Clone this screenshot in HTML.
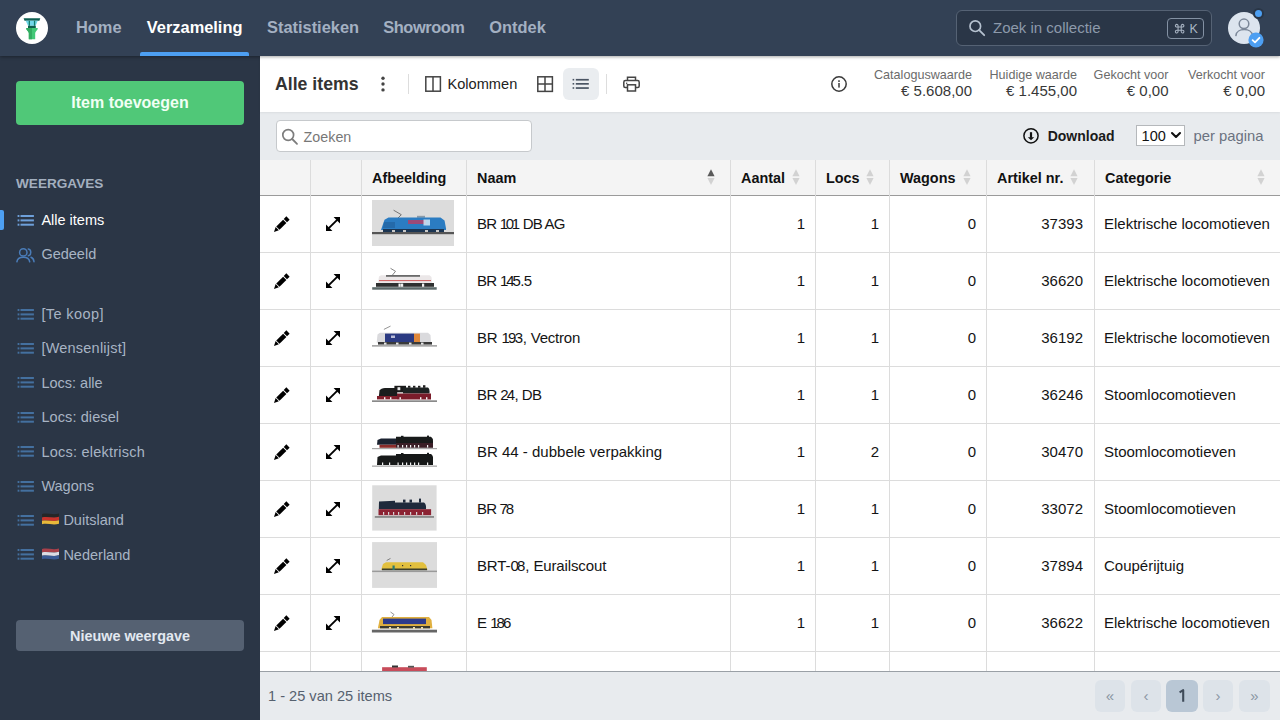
<!DOCTYPE html>
<html><head><meta charset="utf-8">
<style>
*{box-sizing:border-box;margin:0;padding:0}
html,body{width:1280px;height:720px;overflow:hidden;background:#fff}
body{font-family:"Liberation Sans",sans-serif;position:relative;color:#1f1f1f}
.a{position:absolute;white-space:nowrap;line-height:1}
svg{position:absolute;overflow:visible}
#hdr{position:absolute;left:0;top:0;width:1280px;height:56px;background:#334155;z-index:5;box-shadow:0 1px 3px rgba(0,0,0,.35)}
#side{position:absolute;left:0;top:56px;width:260px;height:664px;background:#2b3646}
#tool{position:absolute;left:260px;top:56px;width:1020px;height:56px;background:#fff;z-index:2;box-shadow:0 1px 2px rgba(0,0,0,.06)}
#filt{position:absolute;left:260px;top:112px;width:1020px;height:48px;background:#e8ebee}
#tbl{position:absolute;left:260px;top:160px;width:1020px;height:511px;background:#fff;overflow:hidden}
#foot{position:absolute;left:260px;top:671px;width:1020px;height:49px;background:#e8ebee;border-top:1px solid #9aa0a6}
.nav{font-size:16.4px;font-weight:700;color:#a3b0c2}
.si{font-size:14.5px;color:#a8b4c4}
.th{font-size:14.4px;font-weight:700;color:#111}
.td{font-size:15px;color:#141414}
.r{text-align:right}
.vl{position:absolute;top:0;width:1px;height:511px;background:#dcdcdc}
.hl{position:absolute;left:0;width:1020px;height:1px;background:#dcdcdc}
.pg{position:absolute;top:8px;width:30px;height:32px;border-radius:6px;background:#dde3e9;color:#8a96a3;font-size:15px;text-align:center;line-height:32px}
.lab{font-size:12.6px;color:#6b6b6b;text-align:right}
.val{font-size:15px;color:#383838;text-align:right}
</style></head><body>

<div id="hdr">
<div style="position:absolute;left:16px;top:12px;width:32px;height:32px;border-radius:50%;background:#fff"></div>
<svg style="left:16px;top:12px" width="32" height="32" viewBox="0 0 32 32">
<path d="M7.6 6.3 H24.3 L23.4 8.7 H8.5 Z" fill="#0e5f52"/>
<path d="M9.7 8.7 H21.7 L19.7 13.8 H12 Z" fill="#72d8ea"/>
<rect x="12.7" y="8.7" width="1.3" height="5.1" fill="#157d6c"/>
<rect x="17.9" y="8.7" width="1.3" height="5.1" fill="#157d6c"/>
<rect x="12" y="13.8" width="7.8" height="2.2" fill="#0f5e4c"/>
<path d="M10.2 16 H21.8 C21.8 18.6 19.2 19.4 19.2 21 V27.2 H12.8 V21 C12.8 19.4 10.2 18.6 10.2 16 Z" fill="#43c978"/>
<path d="M10.2 16 H16 V27.2 H12.8 V21 C12.8 19.4 10.2 18.6 10.2 16 Z" fill="#33ad62"/>
</svg>
<div class="a nav" style="left:76px;top:19px;color:#a3b0c2;letter-spacing:0px">Home</div>
<div class="a nav" style="left:146.8px;top:19px;color:#fff;letter-spacing:0px">Verzameling</div>
<div class="a nav" style="left:267px;top:19px;color:#a3b0c2;letter-spacing:0px">Statistieken</div>
<div class="a nav" style="left:383.3px;top:19px;color:#a3b0c2;letter-spacing:-0.45px">Showroom</div>
<div class="a nav" style="left:489.3px;top:19px;color:#a3b0c2;letter-spacing:0px">Ontdek</div>
<div style="position:absolute;left:140px;top:52px;width:109px;height:4px;background:#4d9ff2;border-radius:2px 2px 0 0"></div>
<div style="position:absolute;left:956px;top:10px;width:256px;height:36px;border:1px solid #556274;border-radius:6px;background:#2a3647"></div>
<svg style="left:968px;top:20px" width="18" height="18" viewBox="0 0 18 18"><circle cx="7.3" cy="6.2" r="5.3" fill="none" stroke="#b5c1cf" stroke-width="1.7"/><path d="M11.2 10.2 L16.2 15.2" stroke="#b5c1cf" stroke-width="1.8" stroke-linecap="round"/></svg>
<div class="a" style="left:993px;top:19.5px;font-size:15px;color:#8d9aab">Zoek in collectie</div>
<div style="position:absolute;left:1167px;top:18px;width:37px;height:21px;border:1px solid #8391a3;border-radius:4px"></div>
<svg style="left:1175px;top:23.6px" width="9.3" height="9.3" viewBox="0 0 10 10"><path d="M3.3 3.3 V1.9 A1.45 1.45 0 1 0 1.9 3.3 H8.1 A1.45 1.45 0 1 0 6.7 1.9 V8.1 A1.45 1.45 0 1 0 8.1 6.7 H1.9 A1.45 1.45 0 1 0 3.3 8.1 Z" fill="none" stroke="#a9b5c4" stroke-width="1.1"/></svg>
<div class="a" style="left:1189.5px;top:22.6px;font-size:12.5px;color:#a9b5c4">K</div>
<div style="position:absolute;left:1228px;top:12px;width:32px;height:32px;border-radius:50%;background:#dce4ee"></div>
<svg style="left:1228px;top:12px" width="32" height="32" viewBox="0 0 32 32"><circle cx="16" cy="11.8" r="4.8" fill="none" stroke="#7b8798" stroke-width="1.5"/><path d="M7.9 23.6 C8.6 15.6 23.9 15.6 24.5 23.6" fill="none" stroke="#7b8798" stroke-width="1.5" stroke-linecap="round"/></svg>
<div style="position:absolute;left:1252.5px;top:8px;width:11px;height:11px;border-radius:50%;background:#4d9ff2;border:2px solid #2a3647"></div>
<svg style="left:1248px;top:32px" width="16" height="16" viewBox="0 0 16 16"><circle cx="8" cy="8" r="7.6" fill="#4d9ff2"/><path d="M4.6 8.2 L7 10.4 L11.4 5.8" fill="none" stroke="#fff" stroke-width="1.8" stroke-linecap="round" stroke-linejoin="round"/></svg>
</div>
<div id="side">
<div style="position:absolute;left:16px;top:25px;width:228px;height:44px;border-radius:4px;background:#50c878"></div>
<div class="a" style="left:16px;top:39px;width:228px;text-align:center;font-size:16px;font-weight:700;color:#f0fff4">Item toevoegen</div>
<div class="a" style="left:16px;top:121px;font-size:13.6px;font-weight:700;color:#a3afbf">WEERGAVES</div>
<div style="position:absolute;left:0;top:154px;width:4px;height:20px;background:#4d9ff2;border-radius:0 2px 2px 0"></div>
<svg style="left:16.5px;top:158.6px" width="17" height="11"><rect x="0.6" y="0" width="1.8" height="2" fill="#6ea0da"/><rect x="3.5" y="0" width="13.4" height="2" fill="#6ea0da"/><rect x="0.6" y="4.4" width="1.8" height="2" fill="#6ea0da"/><rect x="3.5" y="4.4" width="13.4" height="2" fill="#6ea0da"/><rect x="0.6" y="8.7" width="1.8" height="2" fill="#6ea0da"/><rect x="3.5" y="8.7" width="13.4" height="2" fill="#6ea0da"/></svg>
<div class="a si" style="left:41.4px;top:157px;color:#fff">Alle items</div>
<svg style="left:16px;top:191px" width="19" height="16" viewBox="0 0 19 16"><circle cx="7.3" cy="5.4" r="3.7" fill="none" stroke="#4a7cb8" stroke-width="1.5"/><path d="M0.9 14.8 C1.6 8.8 13 8.8 13.7 14.8" fill="none" stroke="#4a7cb8" stroke-width="1.5" stroke-linecap="round"/><path d="M12.3 1.9 C15.6 2.3 15.6 8.3 12.3 8.7" fill="none" stroke="#4a7cb8" stroke-width="1.5" stroke-linecap="round"/><path d="M15 10.3 C16.9 11 17.8 12.5 18 14.8" fill="none" stroke="#4a7cb8" stroke-width="1.5" stroke-linecap="round"/></svg>
<div class="a si" style="left:41.4px;top:191px">Gedeeld</div>
<svg style="left:16.5px;top:252.6px" width="17" height="11"><rect x="0.6" y="0" width="1.8" height="2" fill="#44709f"/><rect x="3.5" y="0" width="13.4" height="2" fill="#44709f"/><rect x="0.6" y="4.4" width="1.8" height="2" fill="#44709f"/><rect x="3.5" y="4.4" width="13.4" height="2" fill="#44709f"/><rect x="0.6" y="8.7" width="1.8" height="2" fill="#44709f"/><rect x="3.5" y="8.7" width="13.4" height="2" fill="#44709f"/></svg>
<div class="a si" style="left:41.4px;top:251.0px;letter-spacing:0.4px">[Te koop]</div>
<svg style="left:16.5px;top:287.0px" width="17" height="11"><rect x="0.6" y="0" width="1.8" height="2" fill="#44709f"/><rect x="3.5" y="0" width="13.4" height="2" fill="#44709f"/><rect x="0.6" y="4.4" width="1.8" height="2" fill="#44709f"/><rect x="3.5" y="4.4" width="13.4" height="2" fill="#44709f"/><rect x="0.6" y="8.7" width="1.8" height="2" fill="#44709f"/><rect x="3.5" y="8.7" width="13.4" height="2" fill="#44709f"/></svg>
<div class="a si" style="left:41.4px;top:285.4px;letter-spacing:0.22px">[Wensenlijst]</div>
<svg style="left:16.5px;top:321.40000000000003px" width="17" height="11"><rect x="0.6" y="0" width="1.8" height="2" fill="#44709f"/><rect x="3.5" y="0" width="13.4" height="2" fill="#44709f"/><rect x="0.6" y="4.4" width="1.8" height="2" fill="#44709f"/><rect x="3.5" y="4.4" width="13.4" height="2" fill="#44709f"/><rect x="0.6" y="8.7" width="1.8" height="2" fill="#44709f"/><rect x="3.5" y="8.7" width="13.4" height="2" fill="#44709f"/></svg>
<div class="a si" style="left:41.4px;top:319.8px;letter-spacing:0px">Locs: alle</div>
<svg style="left:16.5px;top:355.8px" width="17" height="11"><rect x="0.6" y="0" width="1.8" height="2" fill="#44709f"/><rect x="3.5" y="0" width="13.4" height="2" fill="#44709f"/><rect x="0.6" y="4.4" width="1.8" height="2" fill="#44709f"/><rect x="3.5" y="4.4" width="13.4" height="2" fill="#44709f"/><rect x="0.6" y="8.7" width="1.8" height="2" fill="#44709f"/><rect x="3.5" y="8.7" width="13.4" height="2" fill="#44709f"/></svg>
<div class="a si" style="left:41.4px;top:354.2px;letter-spacing:0.1px">Locs: diesel</div>
<svg style="left:16.5px;top:390.20000000000005px" width="17" height="11"><rect x="0.6" y="0" width="1.8" height="2" fill="#44709f"/><rect x="3.5" y="0" width="13.4" height="2" fill="#44709f"/><rect x="0.6" y="4.4" width="1.8" height="2" fill="#44709f"/><rect x="3.5" y="4.4" width="13.4" height="2" fill="#44709f"/><rect x="0.6" y="8.7" width="1.8" height="2" fill="#44709f"/><rect x="3.5" y="8.7" width="13.4" height="2" fill="#44709f"/></svg>
<div class="a si" style="left:41.4px;top:388.6px;letter-spacing:0.23px">Locs: elektrisch</div>
<svg style="left:16.5px;top:424.6px" width="17" height="11"><rect x="0.6" y="0" width="1.8" height="2" fill="#44709f"/><rect x="3.5" y="0" width="13.4" height="2" fill="#44709f"/><rect x="0.6" y="4.4" width="1.8" height="2" fill="#44709f"/><rect x="3.5" y="4.4" width="13.4" height="2" fill="#44709f"/><rect x="0.6" y="8.7" width="1.8" height="2" fill="#44709f"/><rect x="3.5" y="8.7" width="13.4" height="2" fill="#44709f"/></svg>
<div class="a si" style="left:41.4px;top:423.0px;letter-spacing:0px">Wagons</div>
<svg style="left:16.5px;top:459.0px" width="17" height="11"><rect x="0.6" y="0" width="1.8" height="2" fill="#44709f"/><rect x="3.5" y="0" width="13.4" height="2" fill="#44709f"/><rect x="0.6" y="4.4" width="1.8" height="2" fill="#44709f"/><rect x="3.5" y="4.4" width="13.4" height="2" fill="#44709f"/><rect x="0.6" y="8.7" width="1.8" height="2" fill="#44709f"/><rect x="3.5" y="8.7" width="13.4" height="2" fill="#44709f"/></svg>
<svg style="left:41.6px;top:457.2px" width="17" height="12" viewBox="0 0 17 12"><path d="M0 1.00 C6 -0.40 11 2.40 17 0.40 V3.85 C11 5.85 6 3.05 0 4.45 Z" fill="#262626"/><path d="M0 4.40 C6 3.00 11 5.80 17 3.80 V7.25 C11 9.25 6 6.45 0 7.85 Z" fill="#c8322a"/><path d="M0 7.80 C6 6.40 11 9.20 17 7.20 V10.65 C11 12.65 6 9.85 0 11.25 Z" fill="#e8b93a"/></svg>
<div class="a si" style="left:63.4px;top:457.4px">Duitsland</div>
<svg style="left:16.5px;top:493.4px" width="17" height="11"><rect x="0.6" y="0" width="1.8" height="2" fill="#44709f"/><rect x="3.5" y="0" width="13.4" height="2" fill="#44709f"/><rect x="0.6" y="4.4" width="1.8" height="2" fill="#44709f"/><rect x="3.5" y="4.4" width="13.4" height="2" fill="#44709f"/><rect x="0.6" y="8.7" width="1.8" height="2" fill="#44709f"/><rect x="3.5" y="8.7" width="13.4" height="2" fill="#44709f"/></svg>
<svg style="left:41.6px;top:491.6px" width="17" height="12" viewBox="0 0 17 12"><path d="M0 1.00 C6 -0.40 11 2.40 17 0.40 V3.85 C11 5.85 6 3.05 0 4.45 Z" fill="#a8404a"/><path d="M0 4.40 C6 3.00 11 5.80 17 3.80 V7.25 C11 9.25 6 6.45 0 7.85 Z" fill="#dcdce4"/><path d="M0 7.80 C6 6.40 11 9.20 17 7.20 V10.65 C11 12.65 6 9.85 0 11.25 Z" fill="#3a5a94"/></svg>
<div class="a si" style="left:63.4px;top:491.8px">Nederland</div>
<div style="position:absolute;left:16px;top:564px;width:228px;height:31px;border-radius:4px;background:#556172"></div>
<div class="a" style="left:16px;top:573px;width:228px;text-align:center;font-size:14.4px;font-weight:700;color:#e2e8f0">Nieuwe weergave</div>
</div>
<div id="tool">
<div class="a" style="left:15px;top:20px;font-size:17.7px;font-weight:700;color:#333">Alle items</div>
<svg style="left:120px;top:20px" width="6" height="16"><circle cx="3" cy="2.3" r="1.7" fill="#444"/><circle cx="3" cy="8" r="1.7" fill="#444"/><circle cx="3" cy="13.9" r="1.7" fill="#444"/></svg>
<div style="position:absolute;left:148px;top:18px;width:1px;height:20px;background:#ddd"></div>
<svg style="left:165px;top:20px" width="16" height="16"><rect x="0.8" y="0.8" width="14.6" height="14.4" fill="none" stroke="#444" stroke-width="1.5"/><path d="M8 0.8 V15.2" stroke="#444" stroke-width="1.5"/></svg>
<div class="a" style="left:187.5px;top:21px;font-size:14.6px;color:#222">Kolommen</div>
<svg style="left:277px;top:20px" width="16" height="16"><rect x="0.8" y="0.8" width="14.6" height="14.6" fill="none" stroke="#444" stroke-width="1.5"/><path d="M8 0.8 V15.4 M0.8 8.1 H15.4" stroke="#444" stroke-width="1.5"/></svg>
<div style="position:absolute;left:303px;top:12px;width:36px;height:32px;border-radius:6px;background:#eaedf0"></div>
<svg style="left:312px;top:22px" width="18" height="12"><rect x="0.6" y="0.9" width="1.6" height="1.6" fill="#4a5563"/><rect x="3.8" y="0.9" width="13" height="1.7" fill="#4a5563"/><rect x="0.6" y="5.0" width="1.6" height="1.6" fill="#4a5563"/><rect x="3.8" y="5.0" width="13" height="1.7" fill="#4a5563"/><rect x="0.6" y="9.2" width="1.6" height="1.6" fill="#4a5563"/><rect x="3.8" y="9.2" width="13" height="1.7" fill="#4a5563"/></svg>
<div style="position:absolute;left:346px;top:18px;width:1px;height:20px;background:#ddd"></div>
<svg style="left:363px;top:20px" width="18" height="16" viewBox="0 0 18 16"><path d="M4.5 4.5 V1.2 H12.5 V4.5" fill="none" stroke="#444" stroke-width="1.5"/><path d="M4 11.5 H2.2 C1.3 11.5 0.8 11 0.8 10 V6.3 C0.8 5.3 1.4 4.6 2.4 4.6 H14.6 C15.6 4.6 16.2 5.3 16.2 6.3 V10 C16.2 11 15.7 11.5 14.8 11.5 H13" fill="none" stroke="#444" stroke-width="1.5"/><rect x="4.5" y="8.8" width="8" height="6.2" fill="none" stroke="#444" stroke-width="1.5"/><rect x="3" y="6.6" width="1.3" height="1.3" fill="#444"/></svg>
<svg style="left:571px;top:20px" width="16" height="16"><circle cx="8" cy="8" r="7.2" fill="none" stroke="#3a3a3a" stroke-width="1.5"/><rect x="7.2" y="4.3" width="1.6" height="1.6" fill="#3a3a3a"/><rect x="7.25" y="7.0" width="1.5" height="4.6" fill="#3a3a3a"/></svg>
<div class="a lab" style="left:582px;width:130px;top:12.5px">Cataloguswaarde</div>
<div class="a val" style="left:582px;width:130px;top:26.5px">&euro; 5.608,00</div>
<div class="a lab" style="left:687px;width:130px;top:12.5px">Huidige waarde</div>
<div class="a val" style="left:687px;width:130px;top:26.5px">&euro; 1.455,00</div>
<div class="a lab" style="left:778.5px;width:130px;top:12.5px">Gekocht voor</div>
<div class="a val" style="left:778.5px;width:130px;top:26.5px">&euro; 0,00</div>
<div class="a lab" style="left:875px;width:130px;top:12.5px">Verkocht voor</div>
<div class="a val" style="left:875px;width:130px;top:26.5px">&euro; 0,00</div>
</div>
<div id="filt">
<div style="position:absolute;left:16px;top:8px;width:256px;height:32px;border:1px solid #c6c9cc;border-radius:4px;background:#fff"></div>
<svg style="left:281px;top:128px;position:fixed" width="18" height="18" viewBox="0 0 18 18"><circle cx="7.2" cy="7" r="5.4" fill="none" stroke="#7d7d7d" stroke-width="1.7"/><path d="M11.2 11 L16 15.8" stroke="#7d7d7d" stroke-width="1.8" stroke-linecap="round"/></svg>
<div class="a" style="left:43.6px;top:18px;font-size:14.3px;color:#777">Zoeken</div>
<svg style="left:763px;top:16px" width="16" height="16" viewBox="0 0 16 16"><circle cx="8" cy="7.8" r="7.1" fill="none" stroke="#111" stroke-width="1.5"/><path d="M8 4.2 V9.8" stroke="#111" stroke-width="2.2"/><path d="M4.8 9.2 H11.2 L8 12.3 Z" fill="#111"/></svg>
<div class="a" style="left:787.7px;top:17px;font-size:14px;font-weight:700;color:#1a1a1a">Download</div>
<div style="position:absolute;left:876px;top:13px;width:49px;height:21px;border:1px solid #b5b8bb;background:#fff"></div>
<div class="a" style="left:881.6px;top:17px;font-size:14.5px;color:#111">100</div>
<svg style="left:911px;top:20px" width="10" height="6" viewBox="0 0 10 6"><path d="M1 1 L5 5 L9 1" fill="none" stroke="#111" stroke-width="2.1" stroke-linecap="round" stroke-linejoin="round"/></svg>
<div class="a" style="left:933.6px;top:17px;font-size:14.8px;color:#6b7280">per pagina</div>
</div>
<div id="tbl">
<div style="position:absolute;left:0;top:0;width:1020px;height:36px;background:#f4f4f4;border-bottom:1px solid #9a9a9a"></div>
<div class="vl" style="left:50px"></div>
<div class="vl" style="left:101px"></div>
<div class="vl" style="left:206px"></div>
<div class="vl" style="left:470px"></div>
<div class="vl" style="left:555px"></div>
<div class="vl" style="left:629px"></div>
<div class="vl" style="left:726px"></div>
<div class="vl" style="left:834px"></div>
<div class="hl" style="top:92px"></div>
<div class="hl" style="top:149px"></div>
<div class="hl" style="top:206px"></div>
<div class="hl" style="top:263px"></div>
<div class="hl" style="top:320px"></div>
<div class="hl" style="top:377px"></div>
<div class="hl" style="top:434px"></div>
<div class="hl" style="top:491px"></div>
<div class="a th" style="left:112px;top:11px">Afbeelding</div>
<div class="a th" style="left:217px;top:11px">Naam</div>
<svg style="left:446.5px;top:9px" width="8" height="17" viewBox="0 0 8 17"><path d="M4 0.2 L7.6 7.2 H0.4 Z" fill="#5a5a5a"/><path d="M0.4 9 H7.6 L4 16 Z" fill="#d2d2d2"/></svg>
<div class="a th" style="left:481px;top:11px">Aantal</div>
<svg style="left:531.5px;top:9px" width="8" height="17" viewBox="0 0 8 17"><path d="M4 0.2 L7.6 7.2 H0.4 Z" fill="#d2d2d2"/><path d="M0.4 9 H7.6 L4 16 Z" fill="#d2d2d2"/></svg>
<div class="a th" style="left:566px;top:11px">Locs</div>
<svg style="left:605.5px;top:9px" width="8" height="17" viewBox="0 0 8 17"><path d="M4 0.2 L7.6 7.2 H0.4 Z" fill="#d2d2d2"/><path d="M0.4 9 H7.6 L4 16 Z" fill="#d2d2d2"/></svg>
<div class="a th" style="left:640px;top:11px">Wagons</div>
<svg style="left:702.5px;top:9px" width="8" height="17" viewBox="0 0 8 17"><path d="M4 0.2 L7.6 7.2 H0.4 Z" fill="#d2d2d2"/><path d="M0.4 9 H7.6 L4 16 Z" fill="#d2d2d2"/></svg>
<div class="a th" style="left:737px;top:11px">Artikel nr.</div>
<svg style="left:809.5px;top:9px" width="8" height="17" viewBox="0 0 8 17"><path d="M4 0.2 L7.6 7.2 H0.4 Z" fill="#d2d2d2"/><path d="M0.4 9 H7.6 L4 16 Z" fill="#d2d2d2"/></svg>
<div class="a th" style="left:845px;top:11px">Categorie</div>
<svg style="left:996.5px;top:9px" width="8" height="17" viewBox="0 0 8 17"><path d="M4 0.2 L7.6 7.2 H0.4 Z" fill="#d2d2d2"/><path d="M0.4 9 H7.6 L4 16 Z" fill="#d2d2d2"/></svg>
<svg style="left:14px;top:58px" width="14" height="14" viewBox="0 0 14 14"><g transform="translate(0 14) rotate(-45)"><path d="M0 0 L4.6 -2.3 V2.3 Z" fill="#000"/><rect x="5.5" y="-2.3" width="9.7" height="4.6" fill="#000"/><rect x="16.1" y="-2.3" width="3.7" height="4.6" fill="#000"/></g></svg>
<svg style="left:66px;top:57px" width="14" height="14" viewBox="0 0 14 14"><path d="M2.8 11.2 L11.2 2.8" stroke="#000" stroke-width="1.9"/><path d="M7.6 0 H14 V6.4 Z" fill="#000"/><path d="M0 7.6 V14 H6.4 Z" fill="#000"/></svg>
<div class="a td" style="left:217px;top:55.7px;letter-spacing:-0.79px">BR <span style="letter-spacing:-2.29px">10</span>1 DB AG</div>
<div class="a td r" style="left:445px;width:100px;top:55.7px">1</div>
<div class="a td r" style="left:519px;width:100px;top:55.7px">1</div>
<div class="a td r" style="left:616px;width:100px;top:55.7px">0</div>
<div class="a td r" style="left:723px;width:100px;top:55.7px">37393</div>
<div class="a td" style="left:844px;top:55.7px">Elektrische locomotieven</div>
<svg style="left:14px;top:115px" width="14" height="14" viewBox="0 0 14 14"><g transform="translate(0 14) rotate(-45)"><path d="M0 0 L4.6 -2.3 V2.3 Z" fill="#000"/><rect x="5.5" y="-2.3" width="9.7" height="4.6" fill="#000"/><rect x="16.1" y="-2.3" width="3.7" height="4.6" fill="#000"/></g></svg>
<svg style="left:66px;top:114px" width="14" height="14" viewBox="0 0 14 14"><path d="M2.8 11.2 L11.2 2.8" stroke="#000" stroke-width="1.9"/><path d="M7.6 0 H14 V6.4 Z" fill="#000"/><path d="M0 7.6 V14 H6.4 Z" fill="#000"/></svg>
<div class="a td" style="left:217px;top:112.7px;letter-spacing:-0.64px">BR <span style="letter-spacing:-2.14px">14</span>5.5</div>
<div class="a td r" style="left:445px;width:100px;top:112.7px">1</div>
<div class="a td r" style="left:519px;width:100px;top:112.7px">1</div>
<div class="a td r" style="left:616px;width:100px;top:112.7px">0</div>
<div class="a td r" style="left:723px;width:100px;top:112.7px">36620</div>
<div class="a td" style="left:844px;top:112.7px">Elektrische locomotieven</div>
<svg style="left:14px;top:172px" width="14" height="14" viewBox="0 0 14 14"><g transform="translate(0 14) rotate(-45)"><path d="M0 0 L4.6 -2.3 V2.3 Z" fill="#000"/><rect x="5.5" y="-2.3" width="9.7" height="4.6" fill="#000"/><rect x="16.1" y="-2.3" width="3.7" height="4.6" fill="#000"/></g></svg>
<svg style="left:66px;top:171px" width="14" height="14" viewBox="0 0 14 14"><path d="M2.8 11.2 L11.2 2.8" stroke="#000" stroke-width="1.9"/><path d="M7.6 0 H14 V6.4 Z" fill="#000"/><path d="M0 7.6 V14 H6.4 Z" fill="#000"/></svg>
<div class="a td" style="left:217px;top:169.7px;letter-spacing:-0.21px">BR <span style="letter-spacing:-1.71px">19</span>3, Vectron</div>
<div class="a td r" style="left:445px;width:100px;top:169.7px">1</div>
<div class="a td r" style="left:519px;width:100px;top:169.7px">1</div>
<div class="a td r" style="left:616px;width:100px;top:169.7px">0</div>
<div class="a td r" style="left:723px;width:100px;top:169.7px">36192</div>
<div class="a td" style="left:844px;top:169.7px">Elektrische locomotieven</div>
<svg style="left:14px;top:229px" width="14" height="14" viewBox="0 0 14 14"><g transform="translate(0 14) rotate(-45)"><path d="M0 0 L4.6 -2.3 V2.3 Z" fill="#000"/><rect x="5.5" y="-2.3" width="9.7" height="4.6" fill="#000"/><rect x="16.1" y="-2.3" width="3.7" height="4.6" fill="#000"/></g></svg>
<svg style="left:66px;top:228px" width="14" height="14" viewBox="0 0 14 14"><path d="M2.8 11.2 L11.2 2.8" stroke="#000" stroke-width="1.9"/><path d="M7.6 0 H14 V6.4 Z" fill="#000"/><path d="M0 7.6 V14 H6.4 Z" fill="#000"/></svg>
<div class="a td" style="left:217px;top:226.7px;letter-spacing:-0.55px">BR <span style="letter-spacing:-2.05px">2</span>4, DB</div>
<div class="a td r" style="left:445px;width:100px;top:226.7px">1</div>
<div class="a td r" style="left:519px;width:100px;top:226.7px">1</div>
<div class="a td r" style="left:616px;width:100px;top:226.7px">0</div>
<div class="a td r" style="left:723px;width:100px;top:226.7px">36246</div>
<div class="a td" style="left:844px;top:226.7px">Stoomlocomotieven</div>
<svg style="left:14px;top:286px" width="14" height="14" viewBox="0 0 14 14"><g transform="translate(0 14) rotate(-45)"><path d="M0 0 L4.6 -2.3 V2.3 Z" fill="#000"/><rect x="5.5" y="-2.3" width="9.7" height="4.6" fill="#000"/><rect x="16.1" y="-2.3" width="3.7" height="4.6" fill="#000"/></g></svg>
<svg style="left:66px;top:285px" width="14" height="14" viewBox="0 0 14 14"><path d="M2.8 11.2 L11.2 2.8" stroke="#000" stroke-width="1.9"/><path d="M7.6 0 H14 V6.4 Z" fill="#000"/><path d="M0 7.6 V14 H6.4 Z" fill="#000"/></svg>
<div class="a td" style="left:217px;top:283.7px;letter-spacing:0px">BR 44 - dubbele verpakking</div>
<div class="a td r" style="left:445px;width:100px;top:283.7px">1</div>
<div class="a td r" style="left:519px;width:100px;top:283.7px">2</div>
<div class="a td r" style="left:616px;width:100px;top:283.7px">0</div>
<div class="a td r" style="left:723px;width:100px;top:283.7px">30470</div>
<div class="a td" style="left:844px;top:283.7px">Stoomlocomotieven</div>
<svg style="left:14px;top:343px" width="14" height="14" viewBox="0 0 14 14"><g transform="translate(0 14) rotate(-45)"><path d="M0 0 L4.6 -2.3 V2.3 Z" fill="#000"/><rect x="5.5" y="-2.3" width="9.7" height="4.6" fill="#000"/><rect x="16.1" y="-2.3" width="3.7" height="4.6" fill="#000"/></g></svg>
<svg style="left:66px;top:342px" width="14" height="14" viewBox="0 0 14 14"><path d="M2.8 11.2 L11.2 2.8" stroke="#000" stroke-width="1.9"/><path d="M7.6 0 H14 V6.4 Z" fill="#000"/><path d="M0 7.6 V14 H6.4 Z" fill="#000"/></svg>
<div class="a td" style="left:217px;top:340.7px;letter-spacing:-0.8px">BR <span style="letter-spacing:-2.3px">7</span>8</div>
<div class="a td r" style="left:445px;width:100px;top:340.7px">1</div>
<div class="a td r" style="left:519px;width:100px;top:340.7px">1</div>
<div class="a td r" style="left:616px;width:100px;top:340.7px">0</div>
<div class="a td r" style="left:723px;width:100px;top:340.7px">33072</div>
<div class="a td" style="left:844px;top:340.7px">Stoomlocomotieven</div>
<svg style="left:14px;top:400px" width="14" height="14" viewBox="0 0 14 14"><g transform="translate(0 14) rotate(-45)"><path d="M0 0 L4.6 -2.3 V2.3 Z" fill="#000"/><rect x="5.5" y="-2.3" width="9.7" height="4.6" fill="#000"/><rect x="16.1" y="-2.3" width="3.7" height="4.6" fill="#000"/></g></svg>
<svg style="left:66px;top:399px" width="14" height="14" viewBox="0 0 14 14"><path d="M2.8 11.2 L11.2 2.8" stroke="#000" stroke-width="1.9"/><path d="M7.6 0 H14 V6.4 Z" fill="#000"/><path d="M0 7.6 V14 H6.4 Z" fill="#000"/></svg>
<div class="a td" style="left:217px;top:397.7px;letter-spacing:-0.13px">BRT-<span style="letter-spacing:-1.63px">0</span>8, Eurailscout</div>
<div class="a td r" style="left:445px;width:100px;top:397.7px">1</div>
<div class="a td r" style="left:519px;width:100px;top:397.7px">1</div>
<div class="a td r" style="left:616px;width:100px;top:397.7px">0</div>
<div class="a td r" style="left:723px;width:100px;top:397.7px">37894</div>
<div class="a td" style="left:844px;top:397.7px">Coup&eacute;rijtuig</div>
<svg style="left:14px;top:457px" width="14" height="14" viewBox="0 0 14 14"><g transform="translate(0 14) rotate(-45)"><path d="M0 0 L4.6 -2.3 V2.3 Z" fill="#000"/><rect x="5.5" y="-2.3" width="9.7" height="4.6" fill="#000"/><rect x="16.1" y="-2.3" width="3.7" height="4.6" fill="#000"/></g></svg>
<svg style="left:66px;top:456px" width="14" height="14" viewBox="0 0 14 14"><path d="M2.8 11.2 L11.2 2.8" stroke="#000" stroke-width="1.9"/><path d="M7.6 0 H14 V6.4 Z" fill="#000"/><path d="M0 7.6 V14 H6.4 Z" fill="#000"/></svg>
<div class="a td" style="left:217px;top:454.7px;letter-spacing:-0.5px">E <span style="letter-spacing:-2.0px">18</span>6</div>
<div class="a td r" style="left:445px;width:100px;top:454.7px">1</div>
<div class="a td r" style="left:519px;width:100px;top:454.7px">1</div>
<div class="a td r" style="left:616px;width:100px;top:454.7px">0</div>
<div class="a td r" style="left:723px;width:100px;top:454.7px">36622</div>
<div class="a td" style="left:844px;top:454.7px">Elektrische locomotieven</div>
<svg style="left:112px;top:35px" width="82" height="57" viewBox="372 195 82 57"><rect x="372" y="200" width="82" height="46" fill="#dcdcdc"/>
<path d="M393.6 210.2 L401.3 214.7 L398 218" fill="none" stroke="#6a6a6a" stroke-width="0.9"/>
<rect x="417" y="215.8" width="8" height="2" fill="#8a9aa8"/>
<path d="M381 230 L384.5 219.8 L388.5 217.6 L440.5 217.6 L444.5 220.5 L446 228.5 L446 230 Z" fill="#2b7cc2"/>
<path d="M384 222 L395 222 L395 228 L383 228 Z" fill="#1f5f9a" opacity="0.6"/>
<rect x="408" y="220" width="18" height="4" fill="#9c4a78"/>
<rect x="423.5" y="219.5" width="6.5" height="6" fill="#cfe6f7" opacity="0.85"/>
<rect x="383" y="229" width="61" height="3" fill="#1b3552"/>
<rect x="392" y="230" width="3" height="2" fill="#c8c8c8"/><rect x="403" y="230" width="3" height="2" fill="#c8c8c8"/><rect x="425" y="230" width="3" height="2" fill="#c8c8c8"/><rect x="436" y="230" width="3" height="2" fill="#c8c8c8"/>
<rect x="372" y="232" width="82" height="2.2" fill="#555"/></svg>
<svg style="left:112px;top:92px" width="82" height="57" viewBox="372 252 82 57"><path d="M390.5 268.3 L395.5 271.3 L392.5 275" fill="none" stroke="#777" stroke-width="0.9"/>
<path d="M378 283.3 L379 276.5 L381 275.2 L429.5 275.2 L431.5 277 L432 283.3 Z" fill="#ebe7e8"/>
<rect x="386" y="275" width="34" height="1.8" fill="#6a6a6a"/>
<rect x="379" y="280" width="52" height="1.1" fill="#d26a6a"/>
<rect x="376" y="283" width="58" height="3.8" fill="#2e3030"/>
<rect x="398.5" y="283.6" width="2.2" height="3.2" fill="#f2f2f2"/><rect x="401" y="283.6" width="2.2" height="3.2" fill="#f2f2f2"/><rect x="422" y="283.6" width="2.2" height="3.2" fill="#f2f2f2"/>
<rect x="372.2" y="287.2" width="64.5" height="2.5" fill="#5d6a6a"/></svg>
<svg style="left:112px;top:149px" width="82" height="57" viewBox="372 309 82 57"><path d="M383.9 329.4 L390.5 326.1" fill="none" stroke="#888" stroke-width="0.9"/>
<path d="M376.7 342.8 L377.5 334.5 L380 332.8 L428 332.8 L430.5 335 L431 342.8 Z" fill="#dadadd"/>
<rect x="385" y="333.6" width="29" height="8.4" fill="#2b3a82"/>
<rect x="391" y="335.5" width="4" height="2.5" fill="#dde" opacity="0.8"/>
<rect x="414" y="333.6" width="6" height="8.4" fill="#e0883a"/>
<rect x="378" y="342" width="54" height="2.6" fill="#3a3a3a"/>
<rect x="384" y="342.6" width="2.5" height="2" fill="#e6e6e6"/><rect x="396" y="342.6" width="2.5" height="2" fill="#e6e6e6"/><rect x="409" y="342.6" width="2.5" height="2" fill="#e6e6e6"/><rect x="421" y="342.6" width="2.5" height="2" fill="#e6e6e6"/>
<rect x="372" y="345" width="65" height="1.7" fill="#a8a8a8"/></svg>
<svg style="left:112px;top:206px" width="82" height="57" viewBox="372 366 82 57"><path d="M378.9 396 L379.5 390.5 Q381 388 385 388 L397.2 388 L397.2 396 Z" fill="#1b1d1d"/>
<rect x="377" y="396" width="20" height="3.4" fill="#82202c"/>
<rect x="394.4" y="385.8" width="11.6" height="6.5" fill="#1a1a1a"/>
<rect x="397.5" y="387.2" width="2.8" height="3" fill="#e8e8e8"/>
<path d="M403 393.5 L403 387.5 L428 387.5 Q430 389 429.5 393.5 Z" fill="#1d2222"/>
<rect x="408" y="385.8" width="2.4" height="2" fill="#222"/><rect x="413" y="385.8" width="2.4" height="2" fill="#222"/><rect x="418" y="385.8" width="2.4" height="2" fill="#222"/><rect x="423" y="385.2" width="2.4" height="2.6" fill="#222"/>
<rect x="397" y="393.5" width="34" height="6" fill="#7a1c2a"/>
<rect x="384" y="397.2" width="1.4" height="2.3" fill="#f4f4f4"/><rect x="390" y="397.2" width="1.4" height="2.3" fill="#f4f4f4"/><rect x="399.5" y="397.2" width="1.4" height="2.3" fill="#f4f4f4"/><rect x="420" y="397.2" width="1.4" height="2.3" fill="#f4f4f4"/><rect x="426" y="397.2" width="1.4" height="2.3" fill="#f4f4f4"/>
<rect x="372" y="400.3" width="65" height="1.7" fill="#8a8a8a"/></svg>
<svg style="left:112px;top:263px" width="82" height="57" viewBox="372 423 82 57"><path d="M377 444.8 L377.5 440 L381 438.5 L396 438.5 L396 444.8 Z" fill="#1b2230"/>
<rect x="379.5" y="444.8" width="16.5" height="3" fill="#8a2c2a"/>
<path d="M396 443 L396 436.7 L431 436.7 Q433.5 438.5 433 441.5 L433 443 Z" fill="#181a1a"/>
<rect x="401" y="435.8" width="2.5" height="1.2" fill="#181a1a"/><rect x="427" y="435.6" width="2" height="1.4" fill="#181a1a"/>
<rect x="396" y="443" width="37" height="4.8" fill="#3a1e26"/>
<rect x="397.5" y="445" width="1.2" height="2.5" fill="#f2f2f2"/><rect x="402" y="445" width="1.2" height="2.5" fill="#f2f2f2"/><rect x="406" y="445" width="1.2" height="2.5" fill="#f2f2f2"/><rect x="410" y="445" width="1.2" height="2.5" fill="#f2f2f2"/><rect x="414" y="445" width="1.2" height="2.5" fill="#f2f2f2"/><rect x="418" y="445" width="1.2" height="2.5" fill="#f2f2f2"/><rect x="427" y="445" width="1.2" height="2.5" fill="#f2f2f2"/>
<rect x="372" y="448" width="65" height="1.2" fill="#a8a8a8"/>
<path d="M377 465 L377.5 457 L381 455.5 L396 455.5 L396 465 Z" fill="#181a1a"/>
<path d="M396 461 L396 453.9 L431 453.9 Q433.5 455.7 433 459 L433 465 L396 465 Z" fill="#161818"/>
<rect x="401" y="453" width="2.5" height="1.2" fill="#181a1a"/><rect x="427" y="452.8" width="2" height="1.4" fill="#181a1a"/>
<rect x="382" y="462.5" width="1.2" height="2.5" fill="#f2f2f2"/><rect x="389" y="462.5" width="1.2" height="2.5" fill="#f2f2f2"/><rect x="397.5" y="462.5" width="1.2" height="2.5" fill="#f2f2f2"/><rect x="402" y="462.5" width="1.2" height="2.5" fill="#f2f2f2"/><rect x="406" y="462.5" width="1.2" height="2.5" fill="#f2f2f2"/><rect x="410" y="462.5" width="1.2" height="2.5" fill="#f2f2f2"/><rect x="414" y="462.5" width="1.2" height="2.5" fill="#f2f2f2"/><rect x="418" y="462.5" width="1.2" height="2.5" fill="#f2f2f2"/><rect x="427" y="462.5" width="1.2" height="2.5" fill="#f2f2f2"/>
<rect x="372" y="465.5" width="65" height="1.3" fill="#a8a8a8"/></svg>
<svg style="left:112px;top:320px" width="82" height="57" viewBox="372 480 82 57"><rect x="372.2" y="485.3" width="64.4" height="45.3" fill="#dcdcdc"/>
<path d="M378.8 509.2 L379 501.5 L395 500.8 L395 502.5 L424 502.5 Q426.5 504 426 509.2 Z" fill="#1e2a3c"/>
<rect x="403" y="499.6" width="2.5" height="3" fill="#1e2a3c"/><rect x="409.5" y="499.6" width="2.5" height="3" fill="#1e2a3c"/><rect x="419" y="498.6" width="2" height="4" fill="#1e2a3c"/>
<rect x="378.5" y="509.2" width="52.6" height="6" fill="#8c2232"/>
<rect x="383" y="512" width="1.2" height="2.8" fill="#d6d6d6"/><rect x="388" y="512" width="1.2" height="2.8" fill="#d6d6d6"/><rect x="393" y="512" width="1.2" height="2.8" fill="#d6d6d6"/><rect x="398" y="512" width="1.2" height="2.8" fill="#d6d6d6"/><rect x="404" y="512" width="1.2" height="2.8" fill="#d6d6d6"/><rect x="410" y="512" width="1.2" height="2.8" fill="#d6d6d6"/><rect x="416" y="512" width="1.2" height="2.8" fill="#d6d6d6"/><rect x="422" y="512" width="1.2" height="2.8" fill="#d6d6d6"/>
<rect x="374.8" y="516.2" width="59.2" height="1.5" fill="#777"/></svg>
<svg style="left:112px;top:377px" width="82" height="57" viewBox="372 537 82 57"><rect x="372.1" y="542.1" width="64.9" height="45.8" fill="#dcdcdc"/>
<path d="M386.7 560.5 L390.5 558.4" fill="none" stroke="#777" stroke-width="0.9"/>
<path d="M381.1 570 L383 564 L386 562.2 L423 562.2 L426 565 L427.6 570 Z" fill="#e2c03e"/>
<rect x="382" y="568.5" width="45" height="1.8" fill="#3d3f2a"/>
<rect x="392.5" y="565.5" width="2.2" height="4.5" fill="#2a7a70"/>
<rect x="402" y="565" width="1.2" height="1.2" fill="#333"/><rect x="410" y="565" width="1.2" height="1.2" fill="#333"/>
<rect x="372.1" y="570.6" width="64.9" height="1.5" fill="#9a9a9a"/></svg>
<svg style="left:112px;top:434px" width="82" height="57" viewBox="372 594 82 57"><path d="M390.5 612 L394 614.5 L392 617" fill="none" stroke="#888" stroke-width="0.9"/>
<path d="M377.9 628.3 L379.5 620 L382 617.1 L429 617.1 L431.5 620 L432.4 628.3 Z" fill="#e0b040"/>
<rect x="383" y="618.6" width="43" height="5.5" fill="#2c3a8c"/>
<rect x="380" y="626" width="50" height="2.4" fill="#3a3a30"/>
<rect x="389" y="627" width="2" height="1.8" fill="#f0e0b0"/><rect x="397" y="627" width="2" height="1.8" fill="#f0e0b0"/><rect x="413" y="627" width="2" height="1.8" fill="#f0e0b0"/><rect x="421" y="627" width="2" height="1.8" fill="#f0e0b0"/>
<rect x="371.9" y="629.7" width="65.1" height="2.8" fill="#666"/></svg>
<svg style="left:112px;top:491px" width="82" height="57" viewBox="372 651 82 57"><rect x="382.1" y="667.2" width="44.7" height="4" fill="#c84c5a"/>
<rect x="392" y="665.5" width="6" height="2" fill="#333"/><rect x="408" y="665.8" width="6" height="1.8" fill="#555"/></svg>
</div>
<div id="foot">
<div class="a" style="left:8px;top:17px;font-size:14.6px;color:#56616f">1 - 25 van 25 items</div>
<div class="pg" style="left:835px">&laquo;</div>
<div class="pg" style="left:871px">&lsaquo;</div>
<div class="pg" style="left:906px;width:31.5px;background:#b9c7d5"></div>
<svg style="left:916px;top:17px" width="10" height="14" viewBox="0 0 10 14"><path d="M3.6 3.3 L7.2 1.2 V12.8" fill="none" stroke="#3f4b59" stroke-width="2.1" stroke-linejoin="round"/></svg>
<div class="pg" style="left:943px">&rsaquo;</div>
<div class="pg" style="left:979px;width:31px">&raquo;</div>
</div>

</body></html>
